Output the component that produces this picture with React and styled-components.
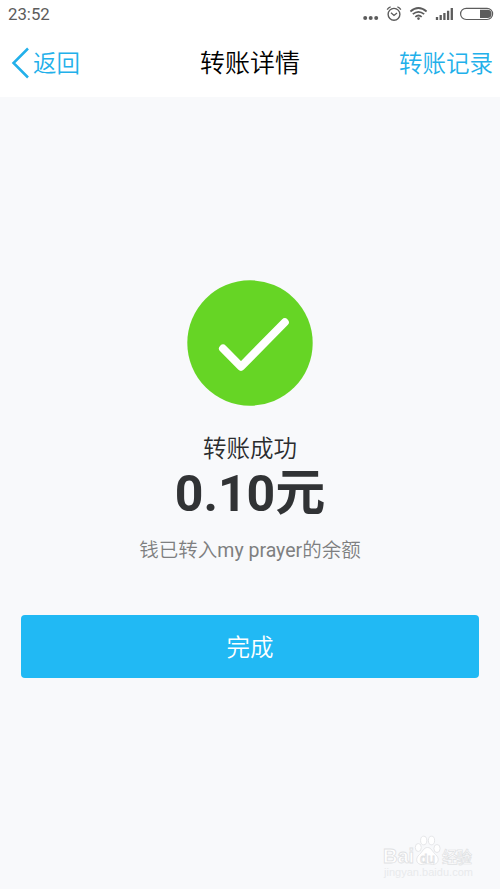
import React from 'react';
import styled, { createGlobalStyle } from 'styled-components';

const GlobalStyle = createGlobalStyle`
  * { box-sizing: border-box; }
  body {
    margin: 0;
    background: #f8f9fb;
    font-family: Roboto, 'Noto Sans CJK SC', sans-serif;
  }
`;

const Screen = styled.div`
  position: relative;
  display: flex;
  flex-direction: column;
  width: 100%;
  height: 889px;
  overflow: hidden;
  background: #f8f9fb;
`;

const StatusBar = styled.div`
  display: flex;
  justify-content: space-between;
  height: 28px;
  padding-left: 8px;
  background: #fff;
`;

const Clock = styled.span`
  font-size: 16.8px;
  line-height: 29px;
  color: #5c5c5c;
`;

const StatusIcons = styled.svg`
  width: 140px;
  height: 28px;
`;

const Header = styled.header`
  display: grid;
  grid-template-columns: 1fr auto 1fr;
  height: 69px;
  padding: 0 7px 0 11px;
  background: #fff;
`;

const NavLink = styled.a`
  display: flex;
  align-items: center;
  justify-content: ${(p) => (p.$end ? 'flex-end' : 'flex-start')};
  font-size: 23.5px;
  font-weight: 350;
  color: #22b0ea;
  white-space: nowrap;
`;

const NavLabel = styled.span`
  padding-top: 4px;
  line-height: 31px;
`;

const BackArrow = styled.svg`
  width: 19px;
  height: 32px;
  margin-right: 3px;
`;

const Title = styled.h1`
  margin: 0;
  padding: 2px 4px 0 0;
  font-size: 25px;
  font-weight: 350;
  line-height: 67px;
  color: #000;
`;

const Result = styled.main`
  display: flex;
  flex-direction: column;
  align-items: center;
  padding: 183px 21px 0;
`;

const SuccessIcon = styled.svg`
  width: 126px;
  height: 126px;
`;

const Message = styled.div`
  margin-top: 26px;
  font-size: 23.5px;
  font-weight: 350;
  line-height: 34px;
  color: #2a2c2e;
`;

const Amount = styled.div`
  display: flex;
  height: 60px;
  margin-top: -2px;
  font-size: 50px;
  font-weight: 700;
  line-height: 60px;
  color: #313335;
`;

const Unit = styled.span`
  margin-top: -1px;
`;

const Note = styled.div`
  margin-top: 13px;
  font-size: 19.5px;
  font-weight: 350;
  line-height: 28px;
  color: #7e7f80;
`;

const Payee = styled.span`
  font-weight: 400;
`;

const DoneButton = styled.button`
  width: 100%;
  height: 63px;
  margin-top: 50px;
  padding: 2px 0 0;
  border: 0;
  border-radius: 4px;
  background: #21b9f4;
  color: #fff;
  font: 350 23.5px/60px Roboto, 'Noto Sans CJK SC', sans-serif;
`;

const Watermark = styled.svg`
  position: absolute;
  right: 22px;
  bottom: 6px;
  width: 98px;
  height: 50px;
`;

export default function App() {
  return (
    <>
      <GlobalStyle />
      <Screen>
        <StatusBar>
          <Clock>23:52</Clock>
          <StatusIcons viewBox="360 0 140 28" fill="none" stroke="#5c5c5c">
            <g fill="#5c5c5c" stroke="none">
              <circle cx="365.2" cy="18" r="2" />
              <circle cx="370.7" cy="18" r="2" />
              <circle cx="376.2" cy="18" r="2" />
            </g>
            <circle cx="394" cy="14.3" r="5.9" strokeWidth="1.4" />
            <path d="M391 12.8l3 2.6 3-2.4M387.2 9.6q1-2 3.4-2.7M400.8 9.6q-1-2-3.4-2.7" strokeWidth="1.3" />
            <path d="M410.4 11.5q8-7 16.2 0M412.8 14.2q5.6-4.8 11.4 0M415.3 16.8q3.2-2.6 6.4 0" strokeWidth="1.7" />
            <circle cx="418.5" cy="18.6" r="1.3" fill="#5c5c5c" stroke="none" />
            <path d="M437 20v-3M440.7 20v-5M444.4 20v-7M448.1 20v-9.2M451.8 20V8" strokeWidth="2.3" />
            <rect x="460.6" y="8.3" width="32" height="11.2" rx="5.6" strokeWidth="1.2" />
            <path d="M480 9.8h7.5q4 0 4 4.1t-4 4.1H480z" fill="#5c5c5c" stroke="none" />
          </StatusIcons>
        </StatusBar>
        <Header>
          <NavLink>
            <BackArrow viewBox="0 0 19 32" fill="none">
              <path d="M17 1.5L2.5 16 17 30.5" stroke="#22b0ea" strokeWidth="2.5" />
            </BackArrow>
            <NavLabel>返回</NavLabel>
          </NavLink>
          <Title>转账详情</Title>
          <NavLink $end>
            <NavLabel>转账记录</NavLabel>
          </NavLink>
        </Header>
        <Result>
          <SuccessIcon viewBox="187 280 126 126">
            <circle cx="250" cy="343" r="62.7" fill="#66d525" />
            <path d="M223 348.5L241 366.7 284.8 322.3" fill="none" stroke="#fff" strokeWidth="8" strokeLinecap="round" strokeLinejoin="round" />
          </SuccessIcon>
          <Message>转账成功</Message>
          <Amount>
            0.10<Unit>元</Unit>
          </Amount>
          <Note>
            钱已转入<Payee>my prayer</Payee>的余额
          </Note>
          <DoneButton>完成</DoneButton>
        </Result>
        <Watermark viewBox="380 833 98 50" fill="#fff" stroke="#dfe1e3" strokeWidth="0.8" fontFamily="'Liberation Sans', 'Noto Sans CJK SC', sans-serif">
          <ellipse cx="418.3" cy="847.5" rx="3" ry="4" />
          <ellipse cx="423.7" cy="840.5" rx="3.1" ry="4.3" />
          <ellipse cx="431.5" cy="840.5" rx="3.1" ry="4.3" />
          <ellipse cx="437" cy="848.5" rx="3.1" ry="4" />
          <path d="M427.5 847.5c4 0 5 4.5 8 7 5 4 2.5 10.5-3 10-4-1-6-1-10 0-6 .5-8-6-3-10 3-2.5 4-7 8-7z" />
          <text x="383" y="863" fontSize="20" fontWeight="700">Bai</text>
          <text x="420" y="862.5" fontSize="13" textLength="15">du</text>
          <text x="442" y="863" fontSize="15.5" fontWeight="500" textLength="30" strokeWidth="0.7">经验</text>
          <text x="384" y="876" fontSize="11" textLength="89" fill="#e8eaec" stroke="none">jingyan.baidu.com</text>
        </Watermark>
      </Screen>
    </>
  );
}
